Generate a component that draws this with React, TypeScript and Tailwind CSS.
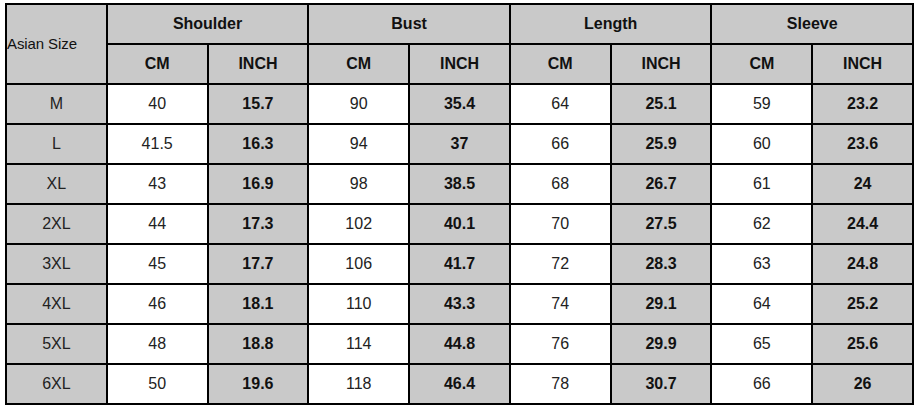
import React from "react";

const groups = ["Shoulder", "Bust", "Length", "Sleeve"];

const rows: [string, string, string, string, string, string, string, string, string][] = [
    ["M", "40", "15.7", "90", "35.4", "64", "25.1", "59", "23.2"],
    ["L", "41.5", "16.3", "94", "37", "66", "25.9", "60", "23.6"],
    ["XL", "43", "16.9", "98", "38.5", "68", "26.7", "61", "24"],
    ["2XL", "44", "17.3", "102", "40.1", "70", "27.5", "62", "24.4"],
    ["3XL", "45", "17.7", "106", "41.7", "72", "28.3", "63", "24.8"],
    ["4XL", "46", "18.1", "110", "43.3", "74", "29.1", "64", "25.2"],
    ["5XL", "48", "18.8", "114", "44.8", "76", "29.9", "65", "25.6"],
    ["6XL", "50", "19.6", "118", "46.4", "78", "30.7", "66", "26"],
];

export default function App() {
    return (
        <div className="w-[919px] h-[408px] bg-white pt-[3px] pl-[5px] font-['Liberation_Sans',Arial,sans-serif] text-[#111]">
            <div className="w-[909px] grid grid-cols-9 auto-rows-[38px] gap-[2px] p-[2px] bg-black">
                {/* header */}
                <div className="row-span-2 bg-[#c9c9c9] flex items-center text-[15px] tracking-[-0.1px]">
                    Asian Size
                </div>
                {groups.map((g) => (
                    <div key={g} className="col-span-2 bg-[#c9c9c9] flex items-center justify-center font-bold text-[16px]">
                        {g}
                    </div>
                ))}
                {groups.map((g) => (
                    <React.Fragment key={g + "-units"}>
                        <div className="bg-[#c9c9c9] flex items-center justify-center font-bold text-[16px]">CM</div>
                        <div className="bg-[#c9c9c9] flex items-center justify-center font-bold text-[16px]">INCH</div>
                    </React.Fragment>
                ))}

                {/* body */}
                {rows.map((r) => (
                    <React.Fragment key={r[0]}>
                        {r.map((cell, i) => {
                            if (i === 0) {
                                return (
                                    <div key={i} className="bg-[#c9c9c9] flex items-center justify-center text-[16px] text-[#222]">
                                        {cell}
                                    </div>
                                );
                            }
                            return i % 2 === 1 ? (
                                <div key={i} className="bg-white flex items-center justify-center text-[16px] text-[#222]">
                                    {cell}
                                </div>
                            ) : (
                                <div key={i} className="bg-[#c9c9c9] flex items-center justify-center font-bold text-[16px]">
                                    {cell}
                                </div>
                            );
                        })}
                    </React.Fragment>
                ))}
            </div>
        </div>
    );
}
